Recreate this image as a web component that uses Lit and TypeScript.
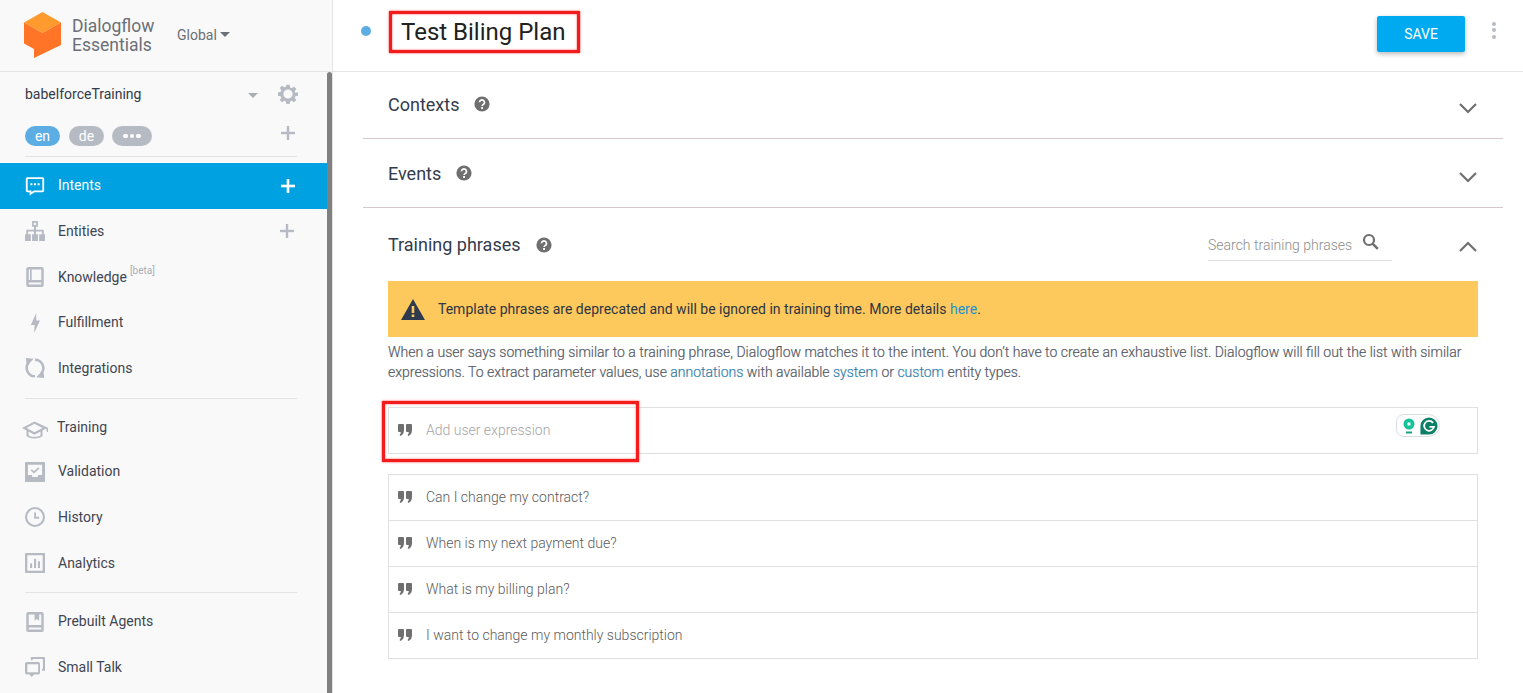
import { LitElement, html, css, svg } from "lit";
import { customElement } from "lit/decorators.js";

const I = (p: unknown, size = 24, box = "0 0 24 24") =>
  html`<svg width=${size} height=${size} viewBox=${box} fill="currentColor">${p}</svg>`;

const icons: Record<string, unknown> = {
  intents: svg`<path fill-rule="evenodd" d="M3 1.500h18a2 2 0 0 1 2 2v14a2 2 0 0 1-2 2H11.500L5.500 23.500V19.500H3a2 2 0 0 1-2-2v-14a2 2 0 0 1 2-2zm.2 2.200v13.600h4.500v1.800l2.900-1.800H20.800V3.700z"/><rect x="6.500" y="8.700" width="2.400" height="2.400"/><rect x="10.800" y="8.700" width="2.400" height="2.400"/><rect x="15.100" y="8.700" width="2.400" height="2.400"/>`,
  entities: svg`<path fill-rule="evenodd" d="M8.500 0h7v7H13.200v3.500H22.500V16H24v8h-7v-8h3.200v-3.300h-7V16H15.500v8h-7v-8h2.300v-3.300h-7V16H7v8H0v-8h1.500V10.500h9.300V7H8.500zM10.700 2.200v2.600h2.600V2.200z"/>`,
  knowledge: svg`<path fill-rule="evenodd" d="M4 0h16a2.500 2.500 0 0 1 2.500 2.500v19A2.500 2.500 0 0 1 20 24H4a2.500 2.500 0 0 1-2.500-2.500v-19A2.500 2.500 0 0 1 4 0zm4 3v12.500h11.500V3zM4.500 3v12.500H6V3zm0 15.500v2.500h15v-2.500z"/>`,
  fulfillment: svg`<path d="M13.500 0 7 14.500h4.500L11 24l7-15h-4.500z"/>`,
  integrations: svg`<path d="M1 0 10.500 1 2 9.500zM23 24l-9.500-1L22 14.500z"/><path d="M4.500 5.500A10 10 0 0 0 12 22" fill="none" stroke="currentColor" stroke-width="3"/><path d="M12 2A10 10 0 0 1 19.500 18.500" fill="none" stroke="currentColor" stroke-width="3"/>`,
  training: svg`<path fill-rule="evenodd" d="M12.500 3.500 0 10l4.500 2.500v5.500c2.500 3.200 13.500 3.200 16 0v-5.500L24 10.500l1 3.500h1V9.800zM12.500 5.800l8 4.200-8 4.200-8-4.200zM6.500 13.600l6 3.100 6-3.100v3.600c-2 2-10 2-12 0z"/>`,
  validation: svg`<path fill-rule="evenodd" d="M1 0h22a1 1 0 0 1 1 1v22a1 1 0 0 1-1 1H1a1 1 0 0 1-1-1V1a1 1 0 0 1 1-1zm2.500 3.200v12.300h5v2.500h7v-2.500h5V3.200z"/><path d="m7.500 9.500 3.200 3 6-5.500" fill="none" stroke="currentColor" stroke-width="2"/>`,
  history: svg`<path fill-rule="evenodd" d="M12 0a12 12 0 1 0 0 24 12 12 0 0 0 0-24zm0 2.500a9.500 9.500 0 1 1 0 19 9.500 9.500 0 0 1 0-19z"/><path d="M11 6.500h2.200v5.300H17V14h-6z"/>`,
  analytics: svg`<path fill-rule="evenodd" d="M1 0h22a1 1 0 0 1 1 1v22a1 1 0 0 1-1 1H1a1 1 0 0 1-1-1V1a1 1 0 0 1 1-1zm1.800 2.800v18.400h18.400V2.800z"/><rect x="6" y="12.500" width="2.500" height="5.500"/><rect x="10.800" y="7" width="2.500" height="11"/><rect x="15.500" y="10" width="2.500" height="8"/>`,
  prebuilt: svg`<path fill-rule="evenodd" d="M4 0h16a2.500 2.500 0 0 1 2.500 2.500v19A2.500 2.500 0 0 1 20 24H4a2.500 2.500 0 0 1-2.500-2.500v-19A2.500 2.500 0 0 1 4 0zm.5 3v12.500h15V3h-2.500v7.500L14 8.500 11.500 10.500V3zm0 15.500V21h15v-2.500z"/>`,
  smalltalk: svg`<path fill-rule="evenodd" d="M2 6h14a2 2 0 0 1 2 2v11a2 2 0 0 1-2 2h-5l-3 3-2.500-3H2a2 2 0 0 1-2-2V8a2 2 0 0 1 2-2zm.8 2.700v9.600h13v-9.600z"/><path d="M7 0h16a1 1 0 0 1 1 1v15.500h-3.500v-2.300h1V2.500H9.200V4H7z"/>`,
};

const mainNav = [
  { id: "entities", label: "Entities", add: true },
  { id: "knowledge", label: "Knowledge", beta: true },
  { id: "fulfillment", label: "Fulfillment" },
  { id: "integrations", label: "Integrations" },
];
const toolNav = [
  { id: "validation", label: "Validation" },
  { id: "history", label: "History" },
  { id: "analytics", label: "Analytics" },
];
const extraNav = [
  { id: "prebuilt", label: "Prebuilt Agents" },
  { id: "smalltalk", label: "Small Talk" },
];
const phrases = [
  "Can I change my contract?",
  "When is my next payment due?",
  "What is my billing plan?",
  "I want to change my monthly subscription",
];

const plus = (size: number, weight: number) =>
  html`<svg width=${size} height=${size} viewBox="0 0 14 14" fill="currentColor"><rect x=${7 - weight / 2} y="0" width=${weight} height="14"/><rect x="0" y=${7 - weight / 2} width="14" height=${weight}/></svg>`;

const help = html`<svg width="16" height="16" viewBox="0 0 16 16"><circle cx="8" cy="8" r="7.600" fill="#6f6f6f"/><path d="M5.500 6.300a2.500 2.500 0 1 1 3.900 2.100c-.9.600-1.300.9-1.300 1.700" fill="none" stroke="#fff" stroke-width="1.700"/><rect x="7.100" y="11" width="1.900" height="1.900" fill="#fff"/></svg>`;

const chevron = (up: boolean) =>
  html`<svg class="chev" width="18" height="11" viewBox="0 0 18 11"><path d=${up ? "M1 10 9 2l8 8" : "M1 1l8 8 8-8"} fill="none" stroke="#6f6f6f" stroke-width="2.200"/></svg>`;

const quote = html`<svg class="quote" width="14" height="12" viewBox="0 0 14 12" fill="#6f6f6f"><path d="M0 1a1 1 0 0 1 1-1h4a1 1 0 0 1 1 1v5c0 3-1.200 5-3.500 6L1.500 11c.8-.6 1.200-1.500 1.300-3H1a1 1 0 0 1-1-1zM8 1a1 1 0 0 1 1-1h4a1 1 0 0 1 1 1v5c0 3-1.200 5-3.500 6l-1-1c.8-.6 1.200-1.500 1.300-3H9a1 1 0 0 1-1-1z"/></svg>`;

@customElement("app-root")
export class AppRoot extends LitElement {
  static styles = css`
    :host {
      display: block;
      width: 1523px;
      height: 693px;
      overflow: hidden;
      font-family: Roboto, "Liberation Sans", sans-serif;
      position: relative;
      background: #fff;
    }
    .app { display: flex; height: 693px; }
    .side {
      width: 332px;
      flex: none;
      background: #f9f9fa;
      border-right: 1px solid #e4e4e6;
      position: relative;
      overflow: hidden;
    }
    .brand {
      height: 71px;
      border-bottom: 1px solid #e4e4e6;
      display: flex;
      align-items: center;
      padding-left: 24px;
    }
    .logo { display: block; margin-bottom: 1px; }
    .brandname {
      margin-left: 11px;
      font-size: 17.500px;
      line-height: 19px;
      color: #6b6f76;
      width: 105px;
    }
    .region { font-size: 14px; color: #6b6f76; display: flex; align-items: center; gap: 3px; padding-bottom: 1px; }
    .caret { width: 0; height: 0; border-left: 5px solid transparent; border-right: 5px solid transparent; border-top: 5px solid #6b6f76; margin-top: -2px; }
    .agent {
      display: flex; align-items: center;
      height: 44px;
      padding: 0 34px 0 25px;
      font-size: 14px;
      color: #333a47;
    }
    .agent .nm { flex: 1; }
    .agent .caret { border-top-color: #a9adb7; margin-right: 20px; margin-top: 2px; }
    .gear { color: #b6bac3; display: block; }
    .langs { display: flex; align-items: center; height: 24px; padding: 0 37px 0 25px; gap: 9px; margin-top: 8px; }
    .pill { height: 20px; border-radius: 10px; background: #b6bac3; color: #fff; font-size: 14px; line-height: 20px; width: 35px; text-align: center; }
    .pill.on { background: #5cade4; }
    .pill.more { width: 40px; margin-left: -1px; font-size: 0; display: flex; align-items: center; justify-content: center; gap: 2px; }
    .pill.more i { width: 4.500px; height: 4.500px; border-radius: 50%; background: #fff; display: block; }
    .langs .sp { flex: 1; }
    .add { color: #b6bac3; display: flex; }
    .langs .add { margin-top: -6px; }
    hr { border: 0; height: 1px; background: #e4e4e6; margin: 0 35px 0 25px; }
    .h1 { margin-top: 8px; }
    .h3 { margin-top: 6px; }
    .nav { display: flex; align-items: center; height: 45.670px; padding: 0 38px 0 25px; font-size: 14px; color: #3f4551; }
    .nav .ic { width: 20px; height: 20px; color: #b6bac3; display: flex; margin-right: 13px; flex: none; }
    .nav .lb { flex: 1; margin-bottom: 1px; }
    .nav sup { font-size: 10px; color: #a9adb7; line-height: 0; position: relative; top: -2px; margin-left: 3px; vertical-align: super; }
    .nav.on { background: #00a1e0; color: #fff; margin-top: 6px; }
    .nav.on .lb { margin-bottom: 2px; }
    .nav.on .ic, .nav.on .add { color: #fff; }
    .nav.on .add { margin-right: -1px; }
    .g1 { margin-bottom: 7px; }
    .g2 { padding-top: 6px; }
    .g3 { padding-top: 6px; }
    .nav.train { height: 43.700px; padding-left: 22px; }
    .train .ic { width: 26px; margin-right: 9px; }
    .thumb { position: absolute; right: 0; top: 72px; bottom: 0; width: 5px; background: #808080; border-radius: 3px 3px 0 0; }

    .main { flex: 1; min-width: 0; position: relative; }
    .top {
      height: 71px;
      border-bottom: 1px solid #e4e4e6;
      display: flex;
      align-items: center;
      padding-left: 28px;
    }
    .dot { width: 10px; height: 10px; border-radius: 50%; background: #5cade4; margin: 0 30px 9px 0; }
    .title { font-size: 24px; color: #212121; flex: 1; margin-bottom: 8px; }
    .save {
      width: 88px; height: 36px; background: #00aaf0; color: #fff; border: 0; border-radius: 2px;
      font: 14px Roboto, "Liberation Sans", sans-serif;
      box-shadow: 0 2px 5px rgba(0,0,0,.28);
      margin-bottom: 3px;
      padding: 0;
    }
    .kebab { display: flex; flex-direction: column; gap: 2.500px; margin: 0 27px 11px 27px; }
    .kebab i { width: 4px; height: 4px; border-radius: 50%; background: #b6bac3; display: block; }
    .panel { margin: 0 20px 0 30px; }
    .sec { border-bottom: 1px solid #d4c8cb; display: flex; align-items: center; padding: 0 26px 0 25px; font-size: 18px; color: #333c4d; }
    .sec.c { padding-bottom: 2px; box-sizing: border-box; height: 67px; }
    .sec.e { height: 68px; }
    .sec h3 { font: inherit; margin: 0 15px 0 0; }
    .sec .sp { flex: 1; }
    .chev { display: block; margin-top: 8px; }
    .body { padding: 0 25px; }
    .thead { display: flex; align-items: center; height: 73px; font-size: 18px; color: #333c4d; }
    .thead h3 { font: inherit; margin: 0 15px 0 0; }
    .thead .sp { flex: 1; }
    .search {
      width: 184px; height: 30px; box-sizing: border-box; border-bottom: 1px solid #e0e0e0;
      display: flex; align-items: center; justify-content: space-between; font-size: 14px;
      color: #8c8c8c; padding-right: 12px; margin: 2px 86px 0 0; font-weight: 300;
    }
    .search svg { margin-top: -7px; color: #6f6f6f; }
    .thead .chev { position: absolute; margin: 0; right: 46px; top: 241px; }
    .warn {
      height: 56px; background: #fdc95c; display: flex; align-items: center;
      padding-left: 13px; font-size: 14px; color: #2f3542;
    }
    .warn svg { margin-right: 13px; flex: none; }
    a { color: #1a93d1; text-decoration: none; }
    .help { font-size: 14px; line-height: 20px; color: #545a66; margin: 5px 0 25px; font-weight: 300; -webkit-text-stroke: 0.2px #545a66; white-space: nowrap; }
    .rows { border: 1px solid #e0e0e0; }
    .addrow { margin-bottom: 20px; position: relative; }
    .row { height: 45px; display: flex; align-items: center; padding-left: 9px; font-size: 14px; font-weight: 300; color: #5b5b5b; }
    .row + .row { border-top: 1px solid #e0e0e0; }
    .row .quote { margin: 0 14px 2px 0; flex: none; }
    .row span { margin-bottom: 2px; }
    .row.ph { height: 45px; color: #a5a5a5; }
    .gram {
      position: absolute; right: 37px; top: 6px; width: 44px; height: 23px; box-sizing: border-box;
      border: 1px solid #d8dde0; border-radius: 8px 12px 12px 8px; background: #fff;
      display: flex; align-items: center; gap: 4px; padding-left: 5px;
    }
    .mark { position: absolute; border: 3px solid #f21c1c; box-shadow: 0 0 2px #ff3a3a, inset 0 0 2px #ff3a3a; box-sizing: border-box; pointer-events: none; }
    .m1 { left: 389px; top: 11px; width: 191px; height: 42px; }
    .m2 { left: 382px; top: 401px; width: 257px; height: 61px; }
  `;

  private navRow(n: { id: string; label: string; add?: boolean; beta?: boolean }) {
    return html`<div class="nav">
      <span class="ic">${I(icons[n.id], 20)}</span>
      <span class="lb">${n.label}${n.beta ? html`<sup>[beta]</sup>` : ""}</span>
      ${n.add ? html`<span class="add">${plus(14, 2.4)}</span>` : ""}
    </div>`;
  }

  render() {
    return html`
      <div class="app">
        <aside class="side">
          <div class="brand">
            <svg class="logo" width="37" height="46" viewBox="0 0 37 46">
              <path d="M18.500 0 37 10.500 18.500 21 0 10.500z" fill="#ff9a2e"/>
              <path d="M0 10.500 18.500 21 37 10.500V33L10 46V37L0 31.500z" fill="#ff7426"/>
            </svg>
            <div class="brandname">Dialogflow Essentials</div>
            <div class="region">Global <span class="caret"></span></div>
          </div>
          <div class="agent">
            <span class="nm">babelforceTraining</span>
            <span class="caret"></span>
            <svg class="gear" width="20" height="20" viewBox="0 0 24 24" fill="currentColor"><path fill-rule="evenodd" d="M10 1h4l.6 3.200 1.900.8 2.700-1.900 2.800 2.800-1.900 2.700.8 1.900L24 10v4l-3.100.6-.8 1.900 1.900 2.700-2.800 2.800-2.700-1.900-1.900.8L14 24h-4l-.6-3.100-1.900-.8-2.700 1.900L2 19.200l1.900-2.700-.8-1.900L0 14v-4l3.100-.5.800-1.900L2 4.900l2.800-2.800 2.700 1.900 1.900-.8zM12 6.500a5.500 5.500 0 1 0 0 11 5.500 5.500 0 0 0 0-11z"/></svg>
          </div>
          <div class="langs">
            <span class="pill on">en</span>
            <span class="pill">de</span>
            <span class="pill more"><i></i><i></i><i></i></span>
            <span class="sp"></span>
            <span class="add">${plus(14, 2.4)}</span>
          </div>
          <hr class="h1" />
          <div class="nav on">
            <span class="ic">${I(icons.intents, 20)}</span>
            <span class="lb">Intents</span>
            <span class="add">${plus(14, 2.6)}</span>
          </div>
          <div class="g1">${mainNav.map((n) => this.navRow(n))}</div>
          <hr />
          <div class="g2">
            <div class="nav train">
              <span class="ic">${I(icons.training, 26, "0 0 26 24")}</span>
              <span class="lb">Training</span>
            </div>
            ${toolNav.map((n) => this.navRow(n))}
          </div>
          <hr class="h3" />
          <div class="g3">${extraNav.map((n) => this.navRow(n))}</div>
          <div class="thumb"></div>
        </aside>
        <main class="main">
          <header class="top">
            <span class="dot"></span>
            <span class="title">Test Biling Plan</span>
            <button class="save">SAVE</button>
            <span class="kebab"><i></i><i></i><i></i></span>
          </header>
          <div class="panel">
            <div class="sec c"><h3>Contexts</h3>${help}<span class="sp"></span>${chevron(false)}</div>
            <div class="sec e"><h3>Events</h3>${help}<span class="sp"></span>${chevron(false)}</div>
            <div class="body">
              <div class="thead">
                <h3>Training phrases</h3>${help}<span class="sp"></span>
                <div class="search">
                  <span>Search training phrases</span>
                  <svg width="18" height="18" viewBox="0 0 18 18"><circle cx="7" cy="7" r="5" fill="none" stroke="currentColor" stroke-width="2.200"/><path d="m10.800 10.800 5 5" stroke="currentColor" stroke-width="2.600"/></svg>
                </div>
                ${chevron(true)}
              </div>
              <div class="warn">
                <svg width="24" height="21" viewBox="0 0 24 21"><path fill-rule="evenodd" fill="#2f3a4f" d="M12 0 24 21H0zM10.700 7v7h2.600V7zm0 8.500v2.500h2.600v-2.500z"/></svg>
                <span>Template phrases are deprecated and will be ignored in training time. More details <a>here</a>.</span>
              </div>
              <div class="help">
                When a user says something similar to a training phrase, Dialogflow matches it to the intent. You don’t have to create an exhaustive list. Dialogflow will fill out the list with similar<br />
                expressions. To extract parameter values, use <a>annotations</a> with available <a>system</a> or <a>custom</a> entity types.
              </div>
              <div class="rows addrow">
                <div class="row ph">${quote}<span>Add user expression</span></div>
                <div class="gram">
                  <svg width="14" height="16" viewBox="0 0 14 16"><circle cx="7" cy="6" r="5.500" fill="#15c39a"/><rect x="5.500" y="4.500" width="3" height="3" fill="#fff"/><rect x="4" y="13.500" width="6" height="2" fill="#15a585"/></svg>
                  <svg width="18" height="18" viewBox="0 0 20 20"><path d="M10 .5a9.500 9.500 0 1 1 0 19H.5V10A9.500 9.500 0 0 1 10 .5z" fill="#0b7f68"/><path d="M14.500 6.500A5.500 5.500 0 1 0 15.500 11H10.500" fill="none" stroke="#fff" stroke-width="2"/></svg>
                </div>
              </div>
              <div class="rows">
                ${phrases.map((p) => html`<div class="row">${quote}<span>${p}</span></div>`)}
              </div>
            </div>
          </div>
        </main>
      </div>
      <div class="mark m1"></div>
      <div class="mark m2"></div>
    `;
  }
}
